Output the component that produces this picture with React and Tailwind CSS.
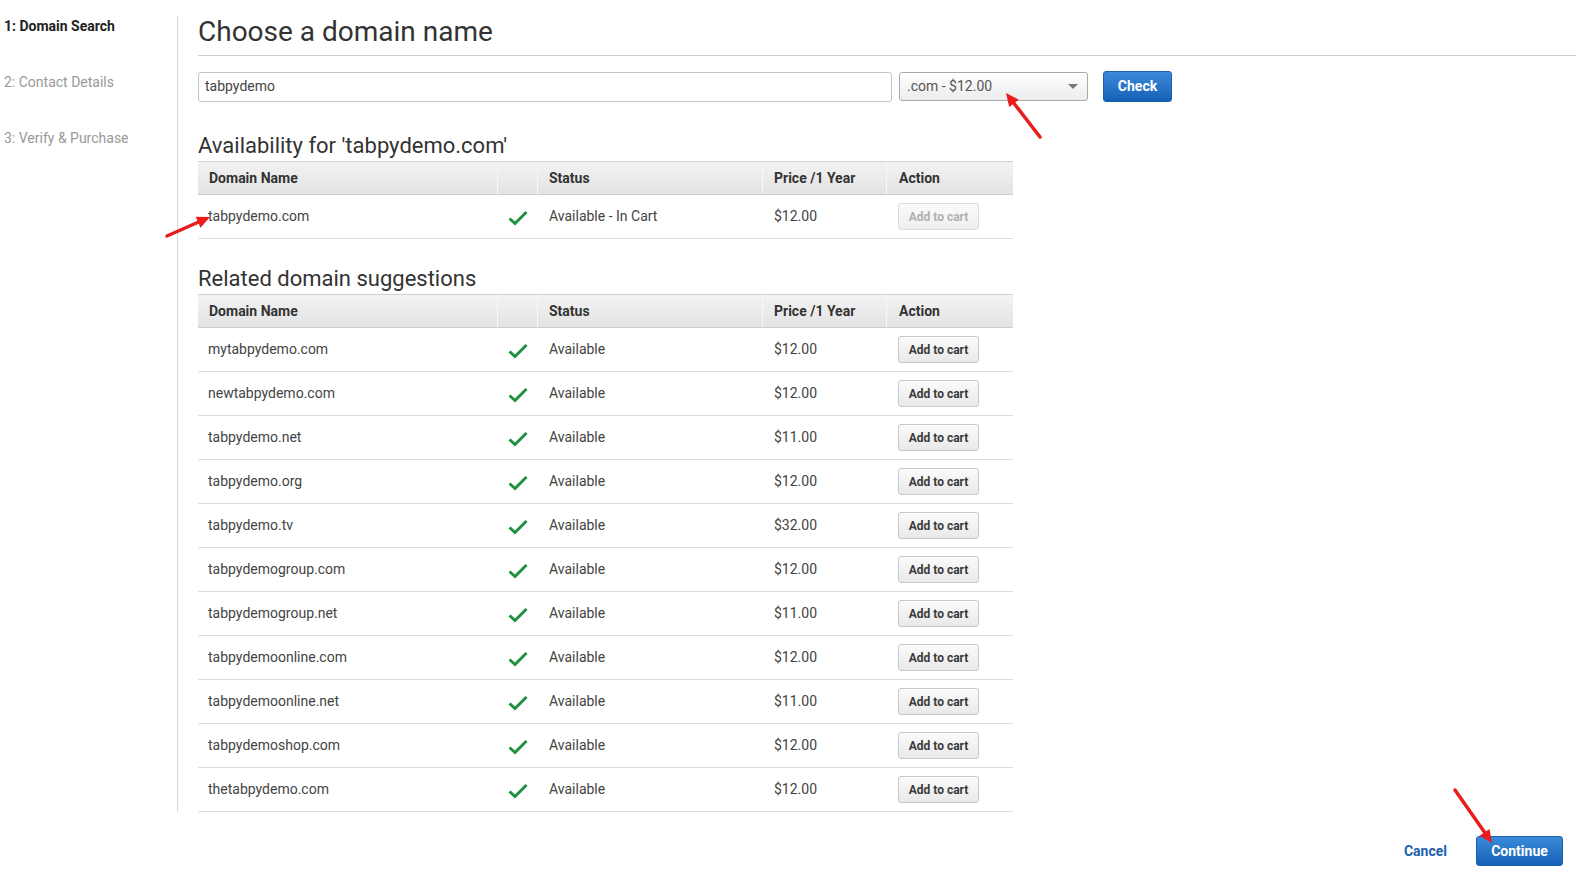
import React from 'react';

const rows = [
  { name: 'mytabpydemo.com', price: '$12.00' },
  { name: 'newtabpydemo.com', price: '$12.00' },
  { name: 'tabpydemo.net', price: '$11.00' },
  { name: 'tabpydemo.org', price: '$12.00' },
  { name: 'tabpydemo.tv', price: '$32.00' },
  { name: 'tabpydemogroup.com', price: '$12.00' },
  { name: 'tabpydemogroup.net', price: '$11.00' },
  { name: 'tabpydemoonline.com', price: '$12.00' },
  { name: 'tabpydemoonline.net', price: '$11.00' },
  { name: 'tabpydemoshop.com', price: '$12.00' },
  { name: 'thetabpydemo.com', price: '$12.00' },
];

function Check() {
  return (
    <svg width="20" height="16" viewBox="0 0 20 16" className="mx-auto">
      <path d="M1.5 8.5 L7 13.5 L18.5 2" fill="none" stroke="#1e9140" strokeWidth="3" strokeLinejoin="miter" />
    </svg>
  );
}

function CartButton({ disabled }) {
  return (
    <button
      className={
        'h-[27px] w-[81px] rounded-[3px] border border-[#c8c8c8] bg-gradient-to-b from-[#fbfbfb] to-[#e9e9e9] text-[12px] font-bold ' +
        (disabled ? 'text-[#b0b0b0] border-[#dcdcdc] from-[#f8f8f8] to-[#efefef]' : 'text-[#3a3a3a]')
      }
    >
      Add to cart
    </button>
  );
}

function HeaderRow() {
  return (
    <div className="flex h-[34px] items-center border-t border-b border-[#d0d0d0] bg-gradient-to-b from-[#f3f3f3] to-[#e3e3e3] text-[14px] font-bold text-[#333]">
      <div className="w-[300px] h-full flex items-center pl-[11px] border-r border-[#f8f8f8]">Domain Name</div>
      <div className="w-[40px] h-full border-r border-[#f8f8f8]"></div>
      <div className="w-[225px] h-full flex items-center pl-[11px] border-r border-[#f8f8f8]">Status</div>
      <div className="w-[124px] h-full flex items-center pl-[11px] border-r border-[#f8f8f8]">Price /1 Year</div>
      <div className="w-[126px] h-full flex items-center pl-[12px]">Action</div>
    </div>
  );
}

function Row({ name, status, price, disabled }) {
  return (
    <div className="flex h-[44px] items-center border-b border-[#dddddd] text-[14px] text-[#444]">
      <div className="w-[300px] pl-[10px]">{name}</div>
      <div className="w-[40px] flex justify-center pt-[2px]"><Check /></div>
      <div className="w-[225px] pl-[11px]">{status}</div>
      <div className="w-[124px] pl-[11px]">{price}</div>
      <div className="w-[126px] pl-[11px]"><CartButton disabled={disabled} /></div>
    </div>
  );
}

function Arrow({ x1, y1, x2, y2 }) {
  const ang = Math.atan2(y2 - y1, x2 - x1);
  const len = 13;
  const w = 6;
  const bx = x2 - Math.cos(ang) * len;
  const by = y2 - Math.sin(ang) * len;
  const px = -Math.sin(ang) * w;
  const py = Math.cos(ang) * w;
  return (
    <g>
      <line x1={x1} y1={y1} x2={bx} y2={by} stroke="#ea1c1c" strokeWidth="3.5" strokeLinecap="round" />
      <polygon points={`${x2},${y2} ${bx + px},${by + py} ${bx - px},${by - py}`} fill="#ea1c1c" />
    </g>
  );
}

export default function App() {
  return (
    <div className="relative min-h-[894px] w-[1576px] bg-white font-['Roboto','Liberation_Sans',sans-serif] overflow-hidden">
      <div className="flex pt-[16px]">
        <div className="w-[178px] shrink-0 border-r border-[#d6d6d6] pl-[4px] text-[14px]">
          <div className="h-[56px] leading-[20px] font-bold text-[#222]">1: Domain Search</div>
          <div className="h-[56px] leading-[20px] text-[#999]">2: Contact Details</div>
          <div className="h-[56px] leading-[20px] text-[#999]">3: Verify &amp; Purchase</div>
          <div className="h-[624px]"></div>
        </div>
        <div className="flex-1 pl-[20px]">
          <h1 className="border-b border-[#cfcfcf] pb-[7px] text-[28px] leading-[32px] text-[#333]">Choose a domain name</h1>
          <div className="mt-[15px] flex items-center">
            <div className="flex h-[30px] w-[694px] items-center rounded-[3px] border border-[#c4c4c4] px-[6px] text-[14px] text-[#444]">tabpydemo</div>
            <div className="ml-[7px] relative flex h-[29px] w-[189px] items-center rounded-[3px] border border-[#a9a9a9] bg-gradient-to-b from-[#ffffff] to-[#ececec] pl-[7px] text-[14px] text-[#555]">
              .com - $12.00
              <span className="absolute right-[9px] top-[11px] h-0 w-0 border-x-[5px] border-t-[5px] border-x-transparent border-t-[#777]"></span>
            </div>
            <button className="ml-[15px] h-[31px] w-[69px] rounded-[3px] border border-[#1a5fa8] bg-gradient-to-b from-[#3b8ad9] to-[#1661b8] text-[14px] font-bold text-white">Check</button>
          </div>
          <div className="w-[815px]">
            <h2 className="mt-[30px] mb-[1px] text-[22px] leading-[28px] text-[#333]">Availability for 'tabpydemo.com'</h2>
            <HeaderRow />
            <Row name="tabpydemo.com" status="Available - In Cart" price="$12.00" disabled />
            <h2 className="mt-[26px] mb-[1px] text-[22px] leading-[28px] text-[#333]">Related domain suggestions</h2>
            <HeaderRow />
            {rows.map((r) => (
              <Row key={r.name} name={r.name} status="Available" price={r.price} />
            ))}
          </div>
        </div>
      </div>
      <div className="mt-[24px] flex items-center justify-end pr-[13px]">
        <span className="text-[14px] font-bold text-[#1d5fae]">Cancel</span>
        <button className="ml-[29px] h-[30px] w-[87px] rounded-[3px] border border-[#1a5fa8] bg-gradient-to-b from-[#3b8ad9] to-[#1661b8] text-[14px] font-bold text-white">Continue</button>
      </div>
      <svg className="pointer-events-none absolute left-0 top-0" width="1576" height="894">
        <Arrow x1={1040} y1={137} x2={1006} y2={93} />
        <Arrow x1={167} y1={236} x2={210} y2={217} />
        <Arrow x1={1455} y1={790} x2={1492} y2={843} />
      </svg>
    </div>
  );
}
